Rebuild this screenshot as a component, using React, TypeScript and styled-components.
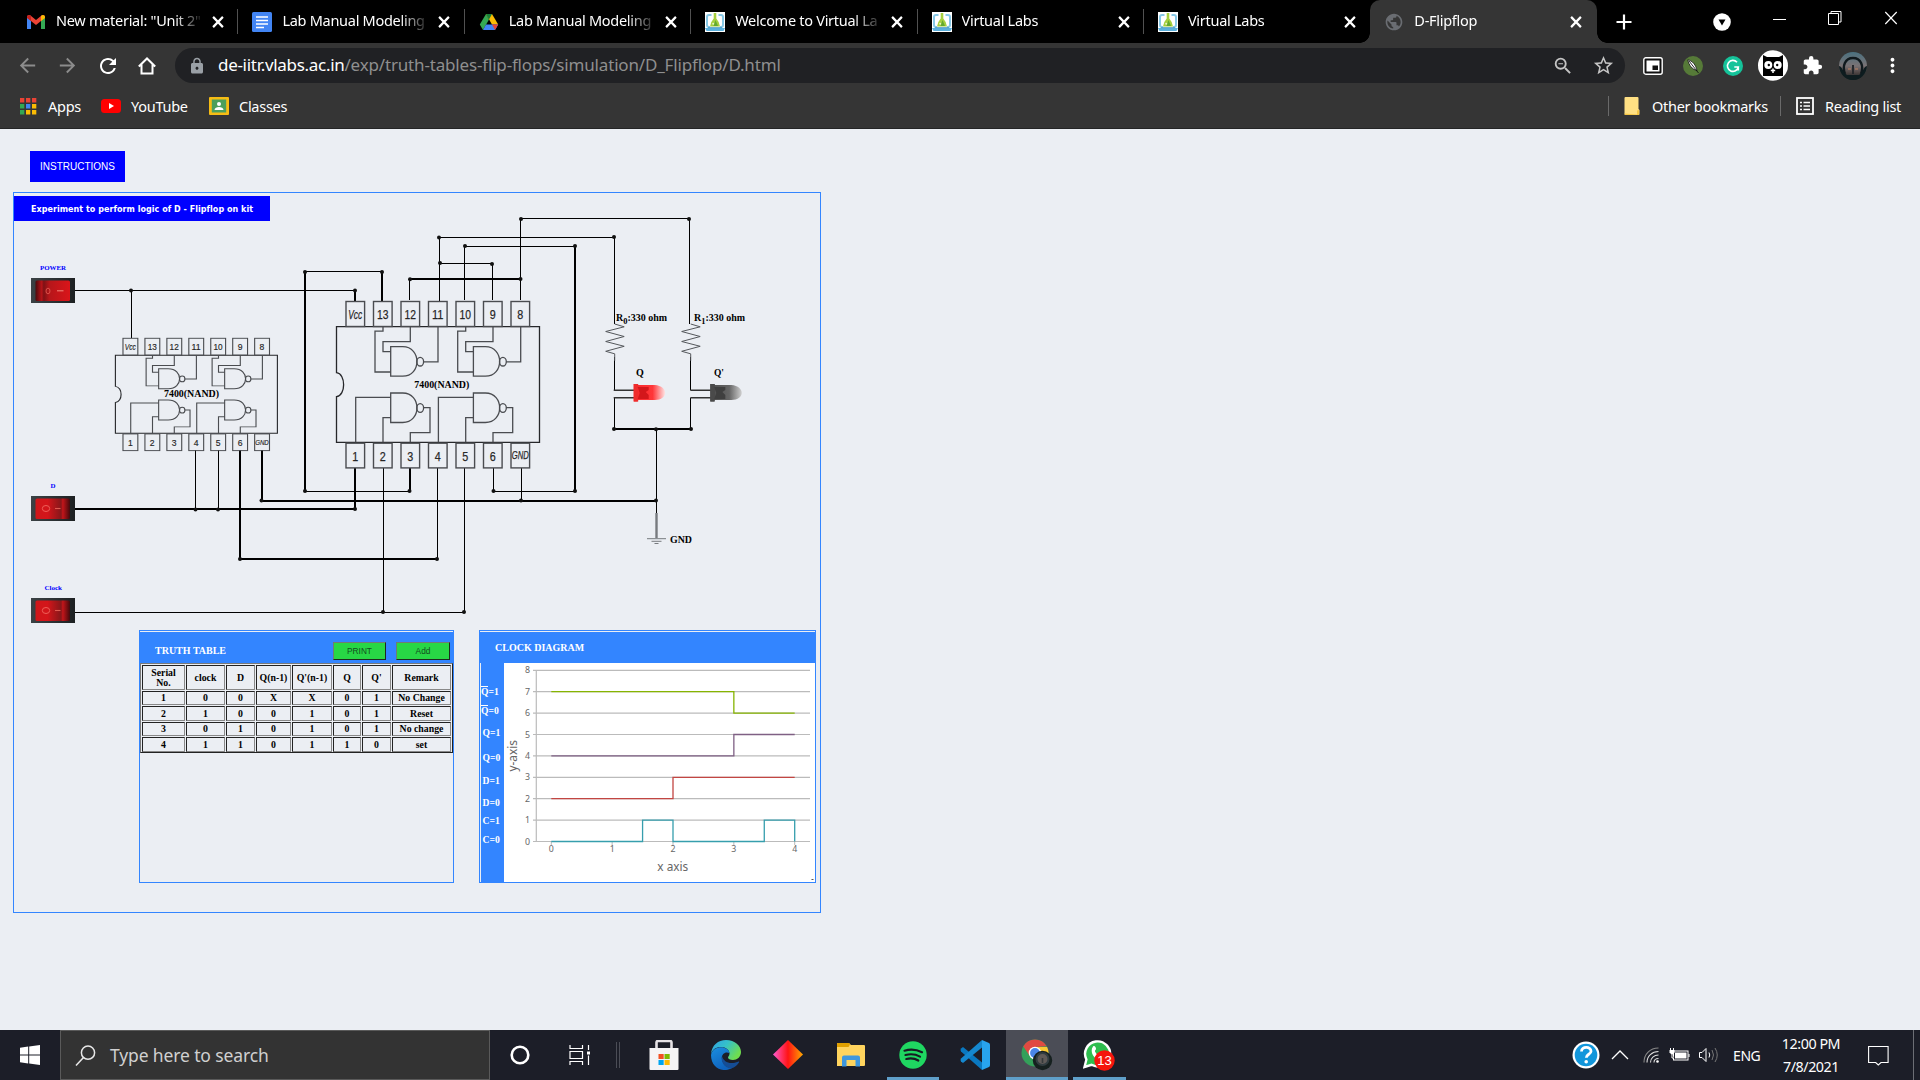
import React from 'react';
import styled, { createGlobalStyle } from 'styled-components';
import { MdArrowBack, MdArrowForward, MdExtension, MdLock, MdMoreVert, MdRefresh, MdStarBorder, MdZoomOut, MdPublic } from 'react-icons/md';

const UI = '"Noto Sans", "Open Sans", sans-serif';
const SERIF = '"Liberation Serif", "Times New Roman", serif';
const SANS = '"Liberation Sans", Arial, sans-serif';
const BLUE = '#3385ff';

const GlobalStyle = createGlobalStyle`
  * { box-sizing: border-box; }
  html, body { margin: 0; padding: 0; background: #ebeef3; }
  body { width: 1920px; height: 1080px; overflow: hidden; }
  svg { display: block; flex: none; }
  button { font: inherit; }
`;

const Screen = styled.div`
  display: flex;
  flex-direction: column;
  width: 1920px;
  height: 1080px;
  background: #ebeef3;
  font-family: ${UI};
`;

const Spaced = styled.div<{ $l?: number; $r?: number }>`
  flex: none;
  margin-left: ${(p) => p.$l ?? 0}px;
  margin-right: ${(p) => p.$r ?? 0}px;
`;

/* ---------- browser chrome ---------- */

const TabStrip = styled.div`
  display: flex;
  height: 43px;
  padding-left: 12px;
  background: #000;
  flex: none;
`;

const Tab = styled.div<{ $active?: boolean; $line?: boolean }>`
  position: relative;
  display: flex;
  align-items: center;
  flex: none;
  width: 226.4px;
  height: 43px;
  padding-left: 14px;
  background: ${(p) => (p.$active ? '#353535' : 'transparent')};
  border-radius: 10px 10px 0 0;
  &::before {
    content: '';
    position: absolute;
    left: -10px;
    right: -10px;
    bottom: 0;
    height: 10px;
    display: ${(p) => (p.$active ? 'block' : 'none')};
    background:
      radial-gradient(circle at 0 0, #000 9.5px, #353535 10px) left / 10px 10px no-repeat,
      radial-gradient(circle at 100% 0, #000 9.5px, #353535 10px) right / 10px 10px no-repeat;
  }
  &::after {
    content: '';
    position: absolute;
    right: 0;
    top: 9px;
    width: 1px;
    height: 25px;
    background: ${(p) => (p.$line ? '#515151' : 'transparent')};
  }
`;

const TabTitle = styled.span`
  width: 148px;
  margin: -3px 8px 0 10px;
  white-space: nowrap;
  color: #fff;
  font-size: 14.5px;
  letter-spacing: -0.28px;
  line-height: 24px;
  mask-image: linear-gradient(90deg, #000 118px, transparent 148px);
`;

const StripTools = styled.div`
  display: flex;
  align-items: center;
  padding-left: 19px;
`;

const WindowButtons = styled.div`
  display: flex;
  align-items: center;
  gap: 42px;
  margin-left: 81px;
`;

const Raised = styled.div`
  margin-top: -8px;
`;

const Toolbar = styled.div`
  display: flex;
  align-items: center;
  height: 45px;
  background: #353535;
  color: #fff;
  flex: none;
`;

const NavGroup = styled.div`
  display: flex;
  align-items: center;
  gap: 17px;
  width: 175px;
  padding-left: 16px;
`;

const Omnibox = styled.div`
  display: flex;
  align-items: center;
  width: 1450px;
  height: 35px;
  padding: 0 10px 0 13px;
  border-radius: 18px;
  background: #202124;
  color: #9aa0a6;
`;

const Url = styled.span`
  flex: 1;
  margin: -2px 0 0 12px;
  font-size: 17px;
  letter-spacing: -0.17px;
  color: #8f8f8f;
  b { font-weight: 400; color: #fff; letter-spacing: -0.3px; }
`;

const ExtensionRow = styled.div`
  display: flex;
  align-items: center;
  padding-left: 17.5px;
`;

const ExtSlot = styled.div`
  display: flex;
  align-items: center;
  justify-content: center;
  width: 40px;
  &:first-child { width: 20px; margin-right: 10px; }
`;

const BookmarkBar = styled.div`
  display: flex;
  align-items: center;
  height: 41px;
  padding: 0 19px 5px 19px;
  background: #353535;
  border-bottom: 1px solid #242526;
  color: #fff;
  font-size: 14.5px;
  letter-spacing: -0.27px;
  flex: none;
`;

const Bookmark = styled.div<{ $w?: number; $gap?: number }>`
  display: flex;
  align-items: center;
  gap: ${(p) => p.$gap ?? 11}px;
  width: ${(p) => (p.$w ? p.$w + 'px' : 'auto')};
  white-space: nowrap;
`;

const Grow = styled.div`
  flex: 1;
`;

const BarLine = styled.div`
  width: 1px;
  height: 20px;
  background: #6a6a6a;
  margin-right: 15px;
`;

/* ---------- lab page ---------- */

const Page = styled.main`
  flex: 1;
  padding: 22px 0 0 13px;
`;

const InstructionsButton = styled.button`
  display: block;
  width: 95px;
  height: 31px;
  margin-left: 17px;
  padding: 0;
  border: 0;
  background: #0000ff;
  color: #fff;
  font-family: ${SANS};
  font-size: 10px;
  letter-spacing: -0.02px;
`;

const Kit = styled.section`
  display: flex;
  flex-direction: column;
  width: 808px;
  height: 721px;
  margin-top: 10px;
  border: 1px solid ${BLUE};
`;

const KitTitle = styled.h1`
  width: 256px;
  height: 25px;
  margin: 3px 0 0;
  padding-left: 17px;
  background: #0000ff;
  color: #fff;
  font: bold 8px/27.5px "DejaVu Sans", Verdana, sans-serif;
  letter-spacing: 0.04px;
  white-space: nowrap;
`;

const CircuitDrawing = styled.svg`
  width: 806px;
  height: 409px;
  overflow: visible;
`;

const Panels = styled.div`
  display: flex;
  gap: 25px;
  padding-left: 125px;
`;

const Panel = styled.div<{ $w: number }>`
  display: flex;
  flex: none;
  flex-direction: column;
  width: ${(p) => p.$w}px;
  height: 253px;
  padding-top: 1px;
  border: 1px solid ${BLUE};
`;

const PanelHead = styled.div<{ $up?: boolean }>`
  display: flex;
  align-items: center;
  height: 31px;
  padding: 0 3px 0 15px;
  background: ${BLUE};
  color: #fff;
  font: bold 10px/12px ${SERIF};
  span { flex: 1; margin-top: ${(p) => (p.$up ? 0 : 6)}px; }
`;

const GreenButton = styled.button<{ $w: number }>`
  width: ${(p) => p.$w}px;
  height: 18px;
  margin: 7px 0 0 10px;
  padding: 0;
  border: 1px solid;
  border-color: #6f7d72 #1c2a1f #1c2a1f #6f7d72;
  background: #28d745;
  color: #134d1e;
  font: 8.3px/15px ${SANS};
`;

const Table = styled.div`
  display: grid;
  grid-template-columns: 43px 39px 29px 35px 40px 28px 29px 59px;
  grid-template-rows: 25px repeat(4, 14.4px);
  gap: 1px;
  width: 313px;
  height: 90px;
  padding: 1px;
  border: 1px solid;
  border-color: #777 #222 #222 #777;
`;

const Cell = styled.div`
  display: flex;
  align-items: center;
  justify-content: center;
  padding-top: 1px;
  border: 1px solid;
  border-color: #222 #888 #888 #222;
  color: #000;
  text-align: center;
  font: bold 9.8px/10.4px ${SERIF};
`;

const ClockBody = styled.div`
  display: flex;
  flex: 1;
`;

const SignalColumn = styled.div`
  width: 23px;
  margin-left: 1px;
  padding-top: 23px;
  background: ${BLUE};
`;

const Signal = styled.div<{ $h: number; $bar?: boolean }>`
  height: ${(p) => p.$h}px;
  padding-left: ${(p) => (p.$bar ? 0 : 1.5)}px;
  color: #fff;
  font: bold 9.6px/12px ${SERIF};
  white-space: nowrap;
  i {
    font-style: normal;
    display: inline-block;
    line-height: 10px;
    border-top: ${(p) => (p.$bar ? '1px solid #fff' : '0')};
  }
`;

const Chart = styled.svg`
  width: 311px;
  height: 219px;
  background: #fff;
`;

/* ---------- taskbar ---------- */

const Taskbar = styled.footer`
  display: flex;
  align-items: stretch;
  height: 50px;
  background: #1c1e28;
  color: #fff;
  flex: none;
`;

const StartButton = styled.div`
  display: flex;
  align-items: center;
  width: 60px;
  padding-left: 20px;
`;

const SearchBox = styled.div`
  display: flex;
  align-items: center;
  gap: 14px;
  width: 430px;
  padding-left: 14px;
  border: 1px solid #5a5a5a;
  background: #333;
  color: #d0d0d0;
  font-size: 17.5px;
  letter-spacing: -0.13px;
`;

const SystemIcons = styled.div`
  display: flex;
  align-items: center;
  width: 143px;
  padding-left: 20px;
`;

const AppSlot = styled.div<{ $open?: boolean; $current?: boolean }>`
  position: relative;
  display: flex;
  align-items: center;
  justify-content: center;
  width: 62.2px;
  &::before {
    content: '';
    position: absolute;
    z-index: 0;
    inset: 0;
    background: ${(p) => (p.$current ? '#4b4d56' : 'transparent')};
  }
  &::after {
    content: '';
    position: absolute;
    bottom: 0;
    left: ${(p) => (p.$current ? 0 : 5)}px;
    right: ${(p) => (p.$current ? 0 : 5)}px;
    height: 3px;
    background: ${(p) => (p.$open || p.$current ? '#5f9fc9' : 'transparent')};
  }
  svg { position: relative; }
`;

const Tray = styled.div`
  display: flex;
  align-items: center;
  margin-left: auto;
  width: 349px;
`;

const Lang = styled.span`
  width: 30px;
  margin-left: 14px;
  font-size: 14px;
  letter-spacing: -0.4px;
`;

const ClockText = styled.div`
  width: 62px;
  margin-left: 17px;
  text-align: center;
  white-space: nowrap;
  font-size: 14.3px;
  line-height: 23px;
  letter-spacing: -0.45px;
`;

const DesktopEdge = styled.div`
  width: 1px;
  height: 50px;
  margin-left: 24px;
  background: #6c6e75;
`;

/* ---------- icons ---------- */

const CloseX = ({ size = 11, w = 2 }: { size?: number; w?: number }) => (
  <svg width={size} height={size} viewBox="0 0 11 11" stroke="#fff" strokeWidth={w} fill="none">
    <path d="M1 .8 10 10.2M10 .8 1 10.2" />
  </svg>
);

const GmailIcon = () => (
  <svg width="20" height="20" viewBox="0 0 20 20">
    <path d="M1 17V5l4 3v9z" fill="#4285f4" />
    <path d="M15 17V8l4-3v12z" fill="#34a853" />
    <path d="M1 5.500C1 3 3.200 2.500 4.500 3.600L10 8l5.500-4.400C16.800 2.500 19 3 19 5.500L15 9l-5 4-5-4z" fill="#ea4335" />
    <path d="M15 4l.5-.4C16.800 2.500 19 3 19 5.500V6l-4 3z" fill="#fbbc04" />
    <path d="M1 5.500C1 3 3.200 2.500 4.500 3.600L5 4v5L1 6z" fill="#c5221f" />
  </svg>
);

const DocsIcon = () => (
  <svg width="20" height="20" viewBox="0 0 20 20">
    <rect width="20" height="20" rx="1.5" fill="#4285f4" />
    <path d="M4 5h12M4 8.500h12M4 12h12M4 15.500h8" stroke="#fff" strokeWidth="1.700" />
  </svg>
);

const DriveIcon = () => (
  <svg width="20" height="20" viewBox="0 0 20 20">
    <path d="M7 2 10 7.500 4 18 .8 12.500z" fill="#34a853" />
    <path d="M7 2h6l6.200 10.500H13z" fill="#fbbc04" />
    <path d="M7 12.500h12.200L16 18H4z" fill="#4285f4" />
    <path d="M13 12.500h6.200L16 18z" fill="#ea4335" />
    <path d="M7 2h6l-3 5.500z" fill="#188038" />
  </svg>
);

const LabsIcon = () => (
  <svg width="20" height="20" viewBox="0 0 20 20">
    <rect width="20" height="20" fill="#fff" />
    <path d="M6.500 3H4a2 2 0 0 0-2 2v8a2 2 0 0 0 2 2h1M13.500 3H16a2 2 0 0 1 2 2v8a2 2 0 0 1-2 2h-1" stroke="#86c8e6" strokeWidth="2" fill="none" />
    <path d="M8.700 1h2.600v5.500q3.200 3.500 3.700 8H5q.5-4.500 3.700-8z" fill="#a5cf3f" />
    <path d="M10.500 8l2.500 6H8.500z" fill="#62a92f" />
    <circle cx="8.200" cy="11.800" r="1" fill="#e9f5c8" />
    <path d="M0 16h20l-1.500 3h-17z" fill="#5bb0dc" />
    <path d="M3 15.700h14" stroke="#4a9cc7" strokeWidth="1" />
  </svg>
);

const HomeIcon = () => (
  <svg width="20" height="20" viewBox="0 0 20 20" fill="none" stroke="#fff" strokeWidth="2">
    <path d="M1.800 10.500 10 2.500 18.200 10.500M4.500 8.500V17.500h11V8.500" />
  </svg>
);

const AppsIcon = () => (
  <svg width="18" height="18" viewBox="0 0 18 18">
    {['#ea4335', '#ea4335', '#ea4335', '#34a853', '#4285f4', '#fbbc04', '#34a853', '#fbbc04', '#fbbc04'].map((c, i) => (
      <rect key={i} x={1 + (i % 3) * 6} y={1 + Math.floor(i / 3) * 6} width="4.300" height="4.500" fill={c} />
    ))}
  </svg>
);

const YouTubeIcon = () => (
  <svg width="20" height="20" viewBox="0 0 20 20">
    <rect y="3" width="20" height="14" rx="3.500" fill="#f00" />
    <path d="M8 7l5 3-5 3z" fill="#fff" />
  </svg>
);

const ClassesIcon = () => (
  <svg width="20" height="20" viewBox="0 0 20 20">
    <rect y="1" width="20" height="18" rx="1" fill="#f6bc14" />
    <rect x="2.800" y="3.500" width="14.400" height="13" fill="#4c9f5c" />
    <circle cx="10" cy="8" r="2" fill="#fff" />
    <path d="M5.500 14c0-4 9-4 9 0z" fill="#fff" />
  </svg>
);

const FolderMark = () => (
  <svg width="16" height="20" viewBox="0 0 16 20">
    <path d="M.5 2a1 1 0 0 1 1-1h12a1 1 0 0 1 1 1v11l1 1v4a1 1 0 0 1-1 1h-13a1 1 0 0 1-1-1z" fill="#ffe083" />
    <path d="M.5 17.500v.5a1 1 0 0 0 1 1H15v-5l-2 .5v4" fill="#f5c644" />
  </svg>
);

const ReadingMark = () => (
  <svg width="18" height="18" viewBox="0 0 18 18" fill="none" stroke="#fff">
    <rect x="1" y="1" width="16" height="16" strokeWidth="1.800" />
    <path d="M4 5.500h2M4 9h2M4 12.500h2M7.500 5.500H14M7.500 9H14M7.500 12.500H14" strokeWidth="1.700" />
  </svg>
);

const OwlIcon = () => (
  <svg width="30" height="31" viewBox="0 0 30 31">
    <ellipse cx="15" cy="15.500" rx="15" ry="15.300" fill="#fff" />
    <path d="M5 5l4 2h12l4-2v21H5z" fill="#000" />
    <circle cx="10.300" cy="15" r="4" fill="#fff" />
    <circle cx="19.700" cy="15" r="4" fill="#fff" />
    <circle cx="10.800" cy="15" r="1.200" />
    <circle cx="19.200" cy="15" r="1.200" />
    <path d="M12.800 20.500h4.400M15 18.500v4.500" stroke="#fff" strokeWidth="1.500" />
  </svg>
);

const PipIcon = () => (
  <svg width="20" height="18" viewBox="0 0 20 18">
    <rect x=".8" y=".8" width="18.400" height="16.400" rx="2" fill="#111" stroke="#fff" strokeWidth="1.400" />
    <rect x="3.500" y="3.500" width="13" height="11" fill="#fff" />
    <rect x="9.500" y="8.500" width="5.500" height="4.500" fill="#111" />
  </svg>
);

const FeatherIcon = () => (
  <svg width="20" height="20" viewBox="0 0 20 20">
    <circle cx="10" cy="10" r="10" fill="#567a38" />
    <path d="M4.800 3.800c4.500 1 8.200 5 9.200 11C9 13 6 9.500 4.800 3.800z" fill="#fff" stroke="#111" strokeWidth=".8" />
    <path d="M6 5l9.500 12" stroke="#111" strokeWidth=".9" />
  </svg>
);

const GrammarIcon = () => (
  <svg width="20" height="20" viewBox="0 0 20 20">
    <circle cx="10" cy="10" r="10" fill="#15c39a" />
    <path d="M14 6.200A5.500 5.500 0 1 0 15.300 11h-4M15.300 10.500V14.500" fill="none" stroke="#fff" strokeWidth="1.600" />
  </svg>
);

const Portrait = ({ size }: { size: number }) => (
  <svg width={size} height={size} viewBox="0 0 28 28">
    <defs>
      <linearGradient id="dusk" x1="0" y1="0" x2="0" y2="1">
        <stop offset="0" stopColor="#4a7180" />
        <stop offset=".5" stopColor="#7a7274" />
        <stop offset=".75" stopColor="#4b4342" />
        <stop offset="1" stopColor="#0c191c" />
      </linearGradient>
    </defs>
    <circle cx="14" cy="14" r="14" fill="url(#dusk)" />
    <path d="M6 22C3 14 6 6 14 6s11 8 8 16" fill="none" stroke="#10191d" strokeWidth="2.400" />
    <path d="M0 14c4 1 4 7 8 9h12c4-2 4-8 8-9 0 8-7 14-14 14S0 22 0 14z" fill="#0d1c1f" />
    <path d="M14 13v9" stroke="#26292d" strokeWidth="2" />
    <path d="M9 17h3M16 17h3" stroke="#c48464" strokeWidth="1.200" />
  </svg>
);

const WindowsLogo = () => (
  <svg width="20" height="20" viewBox="0 0 20 20" fill="#fff">
    <path d="M0 2.800 8.200 1.600V9.500H0zM9.200 1.400 20 0v9.500H9.200zM0 10.500h8.200v7.900L0 17.200zM9.200 10.500H20V20L9.200 18.600z" />
  </svg>
);

const StoreIcon = () => (
  <svg width="30" height="30" viewBox="0 0 30 30">
    <path d="M7.500 9V2.500A1.500 1.500 0 0 1 9 1h12a1.500 1.500 0 0 1 1.500 1.500V9" fill="none" stroke="#e6e3e6" strokeWidth="2.600" />
    <path d="M.5 8h29v21a1 1 0 0 1-1 1h-27a1 1 0 0 1-1-1z" fill="#f5f4f5" />
    <rect x="9.500" y="14" width="5.200" height="5" fill="#f25022" />
    <rect x="15.500" y="14" width="5.200" height="5" fill="#7fba00" />
    <rect x="9.500" y="20" width="5.200" height="5" fill="#00a4ef" />
    <rect x="15.500" y="20" width="5.200" height="5" fill="#ffb900" />
  </svg>
);

const EdgeIcon = () => (
  <svg width="30" height="30" viewBox="0 0 30 30">
    <defs>
      <linearGradient id="edgeTop" x1="0" y1="0" x2="1" y2=".5">
        <stop offset="0" stopColor="#2f9ee6" />
        <stop offset=".5" stopColor="#35c1c9" />
        <stop offset="1" stopColor="#6fdd4f" />
      </linearGradient>
      <linearGradient id="edgeLow" x1="0" y1="0" x2=".5" y2="1">
        <stop offset="0" stopColor="#1a8fe0" />
        <stop offset="1" stopColor="#0f62bd" />
      </linearGradient>
    </defs>
    <path d="M0 14C1 5 7 0 15 0c9 0 15 6 15 12 0 5-4 8-8 8-3 0-5-1-5-2.500 0-1 1.500-1.500 1.500-4C18.500 10 15 7 10 7 5 7 1.500 9.500 0 14z" fill="url(#edgeTop)" />
    <path d="M0 15C1 9.500 6 7.300 10 7.300c4 0 8 2.200 8.500 5.700-5-2-8.500 2-7.500 6.500 1 5 6 9 10 8.500-8 5-21 1-21-13z" fill="url(#edgeLow)" />
    <path d="M11 16c-1.500 5 2 12 9 12.500 4-1 6.500-3.500 8-6 .6-1-.3-1.200-1-.8C19 25 12.500 22 11 16z" fill="#154d95" />
  </svg>
);

const DiamondIcon = () => (
  <svg width="30" height="30" viewBox="0 0 30 30">
    <defs>
      <linearGradient id="dia">
        <stop offset="0" stopColor="#ff5bd0" />
        <stop offset=".5" stopColor="#ff1414" />
        <stop offset="1" stopColor="#ffa800" />
      </linearGradient>
    </defs>
    <path d="M15 0 30 14.500 15 29 0 14.500z" fill="url(#dia)" />
  </svg>
);

const ExplorerIcon = () => (
  <svg width="28" height="24" viewBox="0 0 28 24">
    <path d="M0 1a1 1 0 0 1 1-1h11l2 2h13a1 1 0 0 1 1 1v19a1 1 0 0 1-1 1H0z" fill="#ffd45e" />
    <path d="M0 1a1 1 0 0 1 1-1h11l1 1.500L11.500 4H0z" fill="#e0a000" />
    <path d="M5 23.500v-9a2 2 0 0 1 2-2h14a2 2 0 0 1 2 2v9h-4.500V17h-9v6.500z" fill="#3f97dd" />
  </svg>
);

const SpotifyIcon = () => (
  <svg width="28" height="28" viewBox="0 0 28 28">
    <circle cx="14" cy="14" r="13.700" fill="#1fd761" />
    <path d="M5.500 9.700c5.500-1.600 12-1.200 17.500 1.500M6.500 14c5-1.300 10-.9 14.500 1.600M7.300 18c4-1 8.300-.7 12 1.500" fill="none" stroke="#171b22" strokeWidth="2.200" strokeLinecap="round" />
  </svg>
);

const CodeIcon = () => (
  <svg width="30" height="30" viewBox="0 0 30 30">
    <path d="M1 8.500 3 7l19 15.500V30L1 11.500Q0 10 1 8.500z" fill="#0a78c0" />
    <path d="M1 21.500 3 23 22 7.500V0L1 18.500Q0 20 1 21.500z" fill="#1588cf" />
    <path d="M22 0l7 3q1 .5 1 2v20q0 1.500-1 2l-7 3z" fill="#28a4ee" />
  </svg>
);

const ChromeIcon = () => (
  <svg width="32" height="32" viewBox="0 0 32 32">
    <circle cx="14" cy="14" r="13.500" fill="#34a05a" />
    <path d="M2.300 7.300A13.500 13.500 0 0 1 25.700 7.300L14 8 8 16z" fill="#e04a42" />
    <path d="M14 8h12.100A13.500 13.500 0 0 1 15 27.500l5-10z" fill="#fbc934" />
    <circle cx="14" cy="14" r="6.300" fill="#fff" />
    <circle cx="14" cy="14" r="4.900" fill="#4a86e8" />
    <circle cx="21.500" cy="21.500" r="9.700" fill="#16201f" />
    <circle cx="21.500" cy="20" r="6" fill="#5f5a58" stroke="#313c40" strokeWidth="2" />
    <path d="M21.500 19v5" stroke="#35393b" strokeWidth="1.600" />
  </svg>
);

const WhatsAppIcon = () => (
  <svg width="32" height="32" viewBox="0 0 32 32">
    <path d="M1.500 28 3.400 20.500A12.500 12.500 0 1 1 8.500 25.800z" fill="#2ebd4e" stroke="#fff" strokeWidth="2.400" />
    <path d="M10 7.500c1.500-1 2.500 0 3 2 .3 1.500-1.500 1.800-1 3 1 2.300 3 4 5 4.500l-1 3.500C12 21 6 13 10 7.500z" fill="#fff" />
    <circle cx="21.500" cy="21.500" r="10.200" fill="#f5150d" />
    <text x="21.500" y="26" textAnchor="middle" fontFamily={SANS} fontSize="13" fill="#fff">13</text>
  </svg>
);

/* ---------- circuit ---------- */

const TOP_PINS = ['Vcc', '13', '12', '11', '10', '9', '8'];
const LOW_PINS = ['1', '2', '3', '4', '5', '6', 'GND'];

const Gate = ({ x, y }: { x: number; y: number }) => (
  <>
    <path d={`M${x} ${y}h12c19 0 19 29.500 0 29.500h-12z`} />
    <ellipse cx={x + 29.500} cy={y + 15} rx="3.400" ry="4.300" />
  </>
);

const pinWidth = (t: string) => (t === 'GND' ? 17 : t === 'Vcc' ? 14 : t.length === 2 ? 11.5 : 6);

const PinLabel = ({ text, x, y }: { text: string; x: number; y: number }) => (
  <text
    x={x - pinWidth(text) / 2}
    y={y}
    textLength={pinWidth(text)}
    lengthAdjust="spacingAndGlyphs"
    fontStyle={text.length > 2 ? 'italic' : 'normal'}
    fontSize={text === 'GND' ? 11.5 : 13.5}
    fontFamily={SANS}
    fill="#222"
    stroke="#333"
    strokeWidth=".25"
  >
    {text}
  </text>
);

const Chip = ({ x, y, sx = 1, sy = 1 }: { x: number; y: number; sx?: number; sy?: number }) => (
  <g transform={`translate(${x} ${y}) scale(${sx} ${sy})`} fill="none" stroke="#4a4c50" strokeWidth={sx === 1 ? 1.3 : 1.4}>
    <path d="M0 0H203V115.600H0V70c9.500-1 9.500-23 0-24z" stroke="#26272a" />
    {TOP_PINS.map((t, i) => (
      <g key={t}>
        <rect x={9.500 + i * 27.500} y="-25.200" width="18.600" height="25" strokeWidth="1.400" />
        <PinLabel text={t} x={18.700 + i * 27.500} y={-8} />
      </g>
    ))}
    {LOW_PINS.map((t, i) => (
      <g key={t}>
        <rect x={9.500 + i * 27.500} y="116.500" width="18.600" height="24.700" strokeWidth="1.400" />
        <PinLabel text={t} x={18.700 + i * 27.500} y={t === 'GND' ? 132.5 : 134} />
      </g>
    ))}
    {[0, 82.700].map((dx) => (
      <g key={dx} transform={`translate(${dx} 0)`}>
        <Gate x={54.200} y={20} />
        <Gate x={54.200} y={66.300} />
        <path d="M46.500 0V4.500H38.500V45.300H54.200M73.800 0V15H46.500V25H54.200M87 35.200H101.500V0" />
        <path d="M19.200 115.600V70.700H54.200M46.500 115.600V91H54.200M87 81H93.500V106H73.800V115.600" />
      </g>
    ))}
  </g>
);

const THIN = [
  'M73 290.500H355', 'M131.500 290V338', 'M305 271.500H382', 'M520.500 300V218.500H689.500V324',
  'M439.500 301V237.500H614.500V324', 'M464.500 300V246.500H575', 'M440 263.500H492.500V300', 'M409.500 279V300',
  'M493.500 468V491.500H575', 'M521.500 468V501', 'M305 491.500H410', 'M195.500 450V509', 'M218.500 450V509',
  'M437.500 468V559', 'M383.500 468V612', 'M464.500 468V612', 'M75 612.500H464',
  'M614.500 357V390M614.500 398V429', 'M690.500 357V390M690.500 398V429', 'M656.500 429V513',
];
const THICK = [
  'M355 290V301', 'M382 272V301', 'M305 271V492', 'M575 246V492', 'M409 279H521', 'M410 468V491',
  'M355 468V509', 'M75 509H356', 'M240 450V559H438', 'M262 450V501H656', 'M614 429H691',
];
const NODES: [number, number][] = [
  [131, 290.500], [355, 290.500], [305, 272], [382, 272], [521, 219], [689, 219], [439, 237.500], [614, 237],
  [465, 246], [575, 246], [440, 263], [492, 264], [410, 279.300], [520.500, 279], [493.500, 491], [575, 491],
  [521, 500.500], [305, 491], [409.500, 491], [195.500, 509.500], [218, 509.500], [355, 509], [240, 559], [437, 559],
  [261.500, 500.500], [656, 500.500], [383, 612], [464, 612], [614, 429], [656, 429.300], [691, 429],
];

const Switch = ({ y, on }: { y: number; on?: boolean }) => (
  <g transform={`translate(31 ${y})`}>
    <rect width="44" height="25" fill="url(#frame)" />
    <rect x="4.500" y="2.500" width="34.500" height="20.500" rx="1.500" fill={on ? 'url(#rockOn)' : 'url(#rockOff)'} />
    {on ? (
      <>
        <ellipse cx="17" cy="13" rx="2" ry="2.800" fill="none" stroke="#e0564e" strokeWidth=".9" />
        <path d="M26 12.800h6.500" stroke="#ef7f74" strokeWidth="1.100" />
      </>
    ) : (
      <>
        <ellipse cx="15" cy="12.500" rx="3.700" ry="3" fill="none" stroke="#ef5f58" strokeWidth="1" />
        <path d="M24 12.500h5.500" stroke="#df5a50" strokeWidth="1.100" />
      </>
    )}
  </g>
);

const Resistor = ({ x }: { x: number }) => (
  <path d={`M${x} 324l9.500 2.800-18.500 4.700 18.500 5-18.500 5 18.500 4.800-18.500 5 9 2.500v7`} fill="none" stroke="#55585c" strokeWidth="1" />
);

const Led = ({ x, fill, dark, chip }: { x: number; fill: string; dark: string; chip: string }) => (
  <g>
    <path d={`M${x} 390.300h21M${x} 397.700h21`} stroke="#333" strokeWidth="1.500" />
    <path d={`M${x + 20} 384h4v1h17c14 1 14 15 0 15h-17v1.500h-4z`} fill={fill} />
    <path d={`M${x + 20} 384h4.500v17.500h-4.500z`} fill={dark} />
    <path d={`M${x + 24} 387h11v3l-3 2 3 3v4h-11l2-6z`} fill={chip} />
  </g>
);

const Label = ({ x, y, w, size = 10, color = '#000', children }: { x: number; y: number; w: number; size?: number; color?: string; children: React.ReactNode }) => (
  <text x={x} y={y} textLength={w} lengthAdjust="spacingAndGlyphs" fontFamily={SERIF} fontWeight="bold" fontSize={size} fill={color}>
    {children}
  </text>
);

const Circuit = () => (
  <CircuitDrawing viewBox="14 221 806 409">
    <defs>
      <linearGradient id="frame"><stop offset="0" stopColor="#3b4245" /><stop offset="1" stopColor="#1d2022" /></linearGradient>
      <linearGradient id="rockOn">
        <stop offset="0" stopColor="#4e090c" /><stop offset=".18" stopColor="#b51419" /><stop offset=".24" stopColor="#7e1115" />
        <stop offset=".4" stopColor="#b6161a" /><stop offset="1" stopColor="#da151a" />
      </linearGradient>
      <linearGradient id="rockOff">
        <stop offset="0" stopColor="#cf171a" /><stop offset=".35" stopColor="#d4151a" /><stop offset=".74" stopColor="#86171a" />
        <stop offset=".79" stopColor="#c3151a" /><stop offset="1" stopColor="#43090c" />
      </linearGradient>
      <linearGradient id="ledOn">
        <stop offset="0" stopColor="#f8282c" /><stop offset=".6" stopColor="#ff3638" /><stop offset="1" stopColor="#ffe4e4" />
      </linearGradient>
      <linearGradient id="ledOff">
        <stop offset="0" stopColor="#4b4b4b" /><stop offset=".6" stopColor="#656565" /><stop offset="1" stopColor="#cfcfcf" />
      </linearGradient>
    </defs>
    <g fill="none" stroke="#000">
      <path d={THIN.join('')} strokeWidth="1" />
      <path d={THICK.join('')} strokeWidth="2" />
    </g>
    {NODES.map(([x, y]) => <circle key={`${x}-${y}`} cx={x} cy={y} r="2" fill="#111" />)}
    <Chip x={336.500} y={326.700} />
    <Chip x={115.400} y={355.300} sx={0.798} sy={0.675} />
    <Label x={414.300} y={388} w={55}>7400(NAND)</Label>
    <Label x={164} y={397} w={55}>7400(NAND)</Label>
    <Switch y={278} on />
    <Switch y={496} />
    <Switch y={598} />
    <Label x={40} y={269.700} w={26} size={7} color="#00f">POWER</Label>
    <Label x={50.500} y={487.700} w={5} size={7} color="#00f">D</Label>
    <Label x={44.500} y={589.700} w={17.500} size={7} color="#00f">Clock</Label>
    <Resistor x={614.700} />
    <Resistor x={690.700} />
    <Label x={616} y={321} w={51}>R<tspan dy="3" fontSize="8.500">0</tspan><tspan dy="-3">:330 ohm</tspan></Label>
    <Label x={694} y={321} w={51}>R<tspan dy="3" fontSize="8.500">1</tspan><tspan dy="-3">:330 ohm</tspan></Label>
    <Label x={636} y={376} w={7.800}>Q</Label>
    <Label x={714} y={376} w={10}>Q'</Label>
    <Led x={613.700} fill="url(#ledOn)" dark="#ee2c2c" chip="#d4171b" />
    <Led x={690.300} fill="url(#ledOff)" dark="#4a4a4a" chip="#3f3f3f" />
    <path d="M656.500 513V538" stroke="#777a7e" strokeWidth="2.400" />
    <path d="M647 538.700H666M651.500 541.300H661.500M654.500 543.500H658.500" stroke="#777a7e" strokeWidth="1" />
    <Label x={670} y={543} w={22}>GND</Label>
  </CircuitDrawing>
);

/* ---------- chart ---------- */

const px = (v: number) => 551.3 + v * 60.85;
const py = (v: number) => 841.5 - v * 21.4;
const line = (pts: [number, number][]) => pts.map(([a, b], i) => `${i ? 'L' : 'M'}${px(a)} ${py(b)}`).join('');

const SERIES: { color: string; pts: [number, number][] }[] = [
  { color: '#86b402', pts: [[0, 7], [3, 7], [3, 6], [4, 6]] },
  { color: '#7f6084', pts: [[0, 4], [3, 4], [3, 5], [4, 5]] },
  { color: '#c24642', pts: [[0, 2], [2, 2], [2, 3], [4, 3]] },
  { color: '#369ead', pts: [[0, 0], [1.5, 0], [1.5, 1], [2, 1], [2, 0], [3.5, 0], [3.5, 1], [4, 1], [4, 0]] },
];

const ClockChart = () => (
  <Chart viewBox="504 663 311 219" fontFamily={UI} fill="#666">
    {[0, 1, 2, 3, 4, 5, 6, 7, 8].map((v) => (
      <g key={v}>
        <path d={`M533 ${py(v)}H810`} stroke="#bbb" strokeWidth="1.200" />
        <text x="530" y={py(v) + 3} fontSize="8.800" textAnchor="end">{v}</text>
      </g>
    ))}
    <path d="M536.300 670V842" stroke="#bbb" strokeWidth="1.200" />
    {[0, 1, 2, 3, 4].map((v) => (
      <g key={v}>
        <path d={`M${px(v)} 841V845`} stroke="#bbb" />
        <text x={px(v)} y="852.300" fontSize="8.800" textAnchor="middle">{v}</text>
      </g>
    ))}
    {SERIES.map((s) => <path key={s.color} d={line(s.pts)} fill="none" stroke={s.color} strokeWidth="1.300" />)}
    <text x="657.300" y="870.600" fontSize="12" textLength="31" lengthAdjust="spacingAndGlyphs" fill="#666">x axis</text>
    <text transform="translate(517 771.500) rotate(-90)" fontSize="12" textLength="31.500" lengthAdjust="spacingAndGlyphs" fill="#666">y-axis</text>
    <path d="M811.500 879.500h2" stroke="#555" />
  </Chart>
);

/* ---------- data ---------- */

const TABS = [
  { title: 'New material: "Unit 2"', icon: <GmailIcon /> },
  { title: 'Lab Manual Modeling', icon: <DocsIcon /> },
  { title: 'Lab Manual Modeling', icon: <DriveIcon /> },
  { title: 'Welcome to Virtual La', icon: <LabsIcon /> },
  { title: 'Virtual Labs', icon: <LabsIcon /> },
  { title: 'Virtual Labs', icon: <LabsIcon /> },
  { title: 'D-Flipflop', icon: <MdPublic size={20} color="#6a6d72" /> },
];

const TRUTH = [
  ['Serial No.', 'clock', 'D', 'Q(n-1)', "Q'(n-1)", 'Q', "Q'", 'Remark'],
  ['1', '0', '0', 'X', 'X', '0', '1', 'No Change'],
  ['2', '1', '0', '0', '1', '0', '1', 'Reset'],
  ['3', '0', '1', '0', '1', '0', '1', 'No change'],
  ['4', '1', '1', '0', '1', '1', '0', 'set'],
];

const SIGNALS = [
  { name: 'Q', rest: '=1', h: 19, bar: true },
  { name: 'Q', rest: '=0', h: 22, bar: true },
  { name: 'Q', rest: '=1', h: 25 },
  { name: 'Q', rest: '=0', h: 23 },
  { name: 'D', rest: '=1', h: 22 },
  { name: 'D', rest: '=0', h: 18 },
  { name: 'C', rest: '=1', h: 19 },
  { name: 'C', rest: '=0', h: 19 },
];

const APPS = [
  { icon: <StoreIcon /> },
  { icon: <EdgeIcon /> },
  { icon: <DiamondIcon /> },
  { icon: <ExplorerIcon /> },
  { icon: <SpotifyIcon />, open: true },
  { icon: <CodeIcon /> },
  { icon: <ChromeIcon />, current: true },
  { icon: <WhatsAppIcon />, open: true },
];

export default function App() {
  return (
    <Screen>
      <GlobalStyle />
      <TabStrip>
        {TABS.map((t, i) => (
          <Tab key={i} $active={i === 6} $line={i < 5}>
            {t.icon}
            <TabTitle>{t.title}</TabTitle>
            <CloseX size={12} />
          </Tab>
        ))}
        <StripTools>
          <svg width="16" height="16" viewBox="0 0 16 16" stroke="#fff" strokeWidth="2.200"><path d="M8 .5v15M.5 8h15" /></svg>
          <WindowButtons>
            <svg width="18" height="18" viewBox="0 0 18 18"><circle cx="9" cy="9" r="8.800" fill="#fff" /><path d="M5.500 6.500h7L9 12.500z" fill="#000" /></svg>
            <Raised><svg width="13" height="14" viewBox="0 0 13 14" stroke="#fff"><path d="M0 8.500h13" /></svg></Raised>
            <Raised><svg width="14" height="14" viewBox="0 0 14 14" fill="none" stroke="#fff"><path d="M.5 2.500h10v11H.5zM3 2.500V.5h10v10.500h-2.500" /></svg></Raised>
            <Raised><CloseX size={14} w={0.9} /></Raised>
          </WindowButtons>
        </StripTools>
      </TabStrip>
      <Toolbar>
        <NavGroup>
          <MdArrowBack size={23} color="#8c8c8c" />
          <MdArrowForward size={23} color="#8c8c8c" />
          <MdRefresh size={24} />
          <HomeIcon />
        </NavGroup>
        <Omnibox>
          <MdLock size={18} />
          <Url><b>de-iitr.vlabs.ac.in</b>/exp/truth-tables-flip-flops/simulation/D_Flipflop/D.html</Url>
          <Spaced $r={18}><MdZoomOut size={22} color="#c4c4c4" /></Spaced>
          <MdStarBorder size={23} color="#c4c4c4" />
        </Omnibox>
        <ExtensionRow>
          <ExtSlot><PipIcon /></ExtSlot>
          <ExtSlot><FeatherIcon /></ExtSlot>
          <ExtSlot><GrammarIcon /></ExtSlot>
          <ExtSlot><OwlIcon /></ExtSlot>
          <ExtSlot><MdExtension size={21} /></ExtSlot>
          <ExtSlot><Portrait size={28} /></ExtSlot>
          <ExtSlot><MdMoreVert size={23} /></ExtSlot>
        </ExtensionRow>
      </Toolbar>
      <BookmarkBar>
        <Bookmark $w={82}><AppsIcon />Apps</Bookmark>
        <Bookmark $w={108} $gap={10}><YouTubeIcon />YouTube</Bookmark>
        <Bookmark $gap={10}><ClassesIcon />Classes</Bookmark>
        <Grow />
        <BarLine />
        <Bookmark $w={156} $gap={12}><FolderMark />Other bookmarks</Bookmark>
        <BarLine />
        <Bookmark $gap={11} $w={105}><ReadingMark />Reading list</Bookmark>
      </BookmarkBar>

      <Page>
        <InstructionsButton>INSTRUCTIONS</InstructionsButton>
        <Kit>
          <KitTitle>Experiment to perform logic of D - Flipflop on kit</KitTitle>
          <Circuit />
          <Panels>
            <Panel $w={315}>
              <PanelHead>
                <span>TRUTH TABLE</span>
                <GreenButton $w={53}>PRINT</GreenButton>
                <GreenButton $w={54}>Add</GreenButton>
              </PanelHead>
              <Table>
                {TRUTH.flatMap((row, r) => row.map((c, i) => <Cell key={`${r}-${i}`}>{c}</Cell>))}
              </Table>
            </Panel>
            <Panel $w={337}>
              <PanelHead $up><span>CLOCK DIAGRAM</span></PanelHead>
              <ClockBody>
                <SignalColumn>
                  {SIGNALS.map((s, i) => (
                    <Signal key={i} $h={s.h} $bar={s.bar}><i>{s.name}</i>{s.rest}</Signal>
                  ))}
                </SignalColumn>
                <ClockChart />
              </ClockBody>
            </Panel>
          </Panels>
        </Kit>
      </Page>

      <Taskbar>
        <StartButton><WindowsLogo /></StartButton>
        <SearchBox>
          <svg width="21" height="21" viewBox="0 0 21 21" fill="none" stroke="#e8e8e8" strokeWidth="1.500"><circle cx="13" cy="7.700" r="6.600" /><path d="M8.500 12.500 1 20.500" /></svg>
          Type here to search
        </SearchBox>
        <SystemIcons>
          <svg width="20" height="20" viewBox="0 0 20 20"><circle cx="10" cy="10" r="8.300" fill="none" stroke="#fff" strokeWidth="2.600" /></svg>
          <Spaced $l={39}>
            <svg width="22" height="20" viewBox="0 0 22 20" fill="none" stroke="#fff" strokeWidth="1.200">
              <path d="M1 0V3.500H13.500V0M1 6.500H13.500V13.500H1zM1 20V16.500H13.500V20M19.500 0V5M19.500 10.500V20" />
              <rect x="18" y="6.500" width="3" height="3" fill="#fff" stroke="none" />
            </svg>
          </Spaced>
          <Spaced $l={25}>
            <svg width="5" height="26" viewBox="0 0 5 26" stroke="#4b4d56"><path d="M.5 0v26M3.500 0v26" /></svg>
          </Spaced>
        </SystemIcons>
        {APPS.map((a, i) => <AppSlot key={i} $open={a.open} $current={a.current}>{a.icon}</AppSlot>)}
        <Tray>
          <svg width="30" height="30" viewBox="0 0 30 30">
            <circle cx="15" cy="15" r="13.500" fill="#fff" />
            <circle cx="15" cy="15" r="11.300" fill="#1296db" />
            <path d="M10.500 11.500c0-5.500 9.500-5.500 9.500-.3 0 3.200-4.700 3-4.700 6.600" fill="none" stroke="#fff" strokeWidth="2.800" />
            <circle cx="15.200" cy="21.800" r="1.800" fill="#fff" />
          </svg>
          <Spaced $l={10}>
            <svg width="18" height="10" viewBox="0 0 18 10" fill="none" stroke="#fff" strokeWidth="1.300"><path d="M1 9 9 1l8 8" /></svg>
          </Spaced>
          <Spaced $l={13}>
            <svg width="18" height="18" viewBox="0 0 18 18" fill="none" stroke="#ddd" strokeWidth="1.100">
              <path d="M2 16.500C2 8 8 2 16.500 2" stroke="#888" />
              <path d="M5 16.500C5 10 10 5.500 16.500 5.500M8.500 16.500c0-4.500 3.500-7.500 8-7.500M12 16.500c0-2.500 2-4 4.500-4" />
              <circle cx="15.500" cy="15.500" r="1.300" fill="#fff" stroke="none" />
            </svg>
          </Spaced>
          <Spaced $l={9}>
            <svg width="21" height="16" viewBox="0 0 21 16">
              <rect x="4.500" y="4" width="14.500" height="9" fill="none" stroke="#fff" />
              <rect x="6" y="5.500" width="11.500" height="6" fill="#fff" />
              <path d="M20 7v3M1.500 1v2.500M4.500 1v2.500M3 7.500V11h2" stroke="#fff" />
              <path d="M.5 3h5v2.500L3 8 .5 5.500z" fill="#fff" />
            </svg>
          </Spaced>
          <Spaced $l={8}>
            <svg width="21" height="18" viewBox="0 0 21 18" fill="none" stroke="#fff">
              <path d="M1.500 6.500h2.500l4-4v13l-4-4H1.500z" />
              <path d="M11 6.500q1.500 2.500 0 5" />
              <path d="M14 4q3 5 0 10M17 2q4.500 7 0 14" stroke="#777" />
            </svg>
          </Spaced>
          <Lang>ENG</Lang>
          <ClockText>12:00 PM<br />7/8/2021</ClockText>
          <Spaced $l={26}>
            <svg width="21" height="21" viewBox="0 0 21 21" fill="none" stroke="#fff" strokeWidth="1.100"><path d="M.6 1.500h19.500V17.500H13L10.300 20 7.700 17.500H.6z" /></svg>
          </Spaced>
          <DesktopEdge />
        </Tray>
      </Taskbar>
    </Screen>
  );
}
